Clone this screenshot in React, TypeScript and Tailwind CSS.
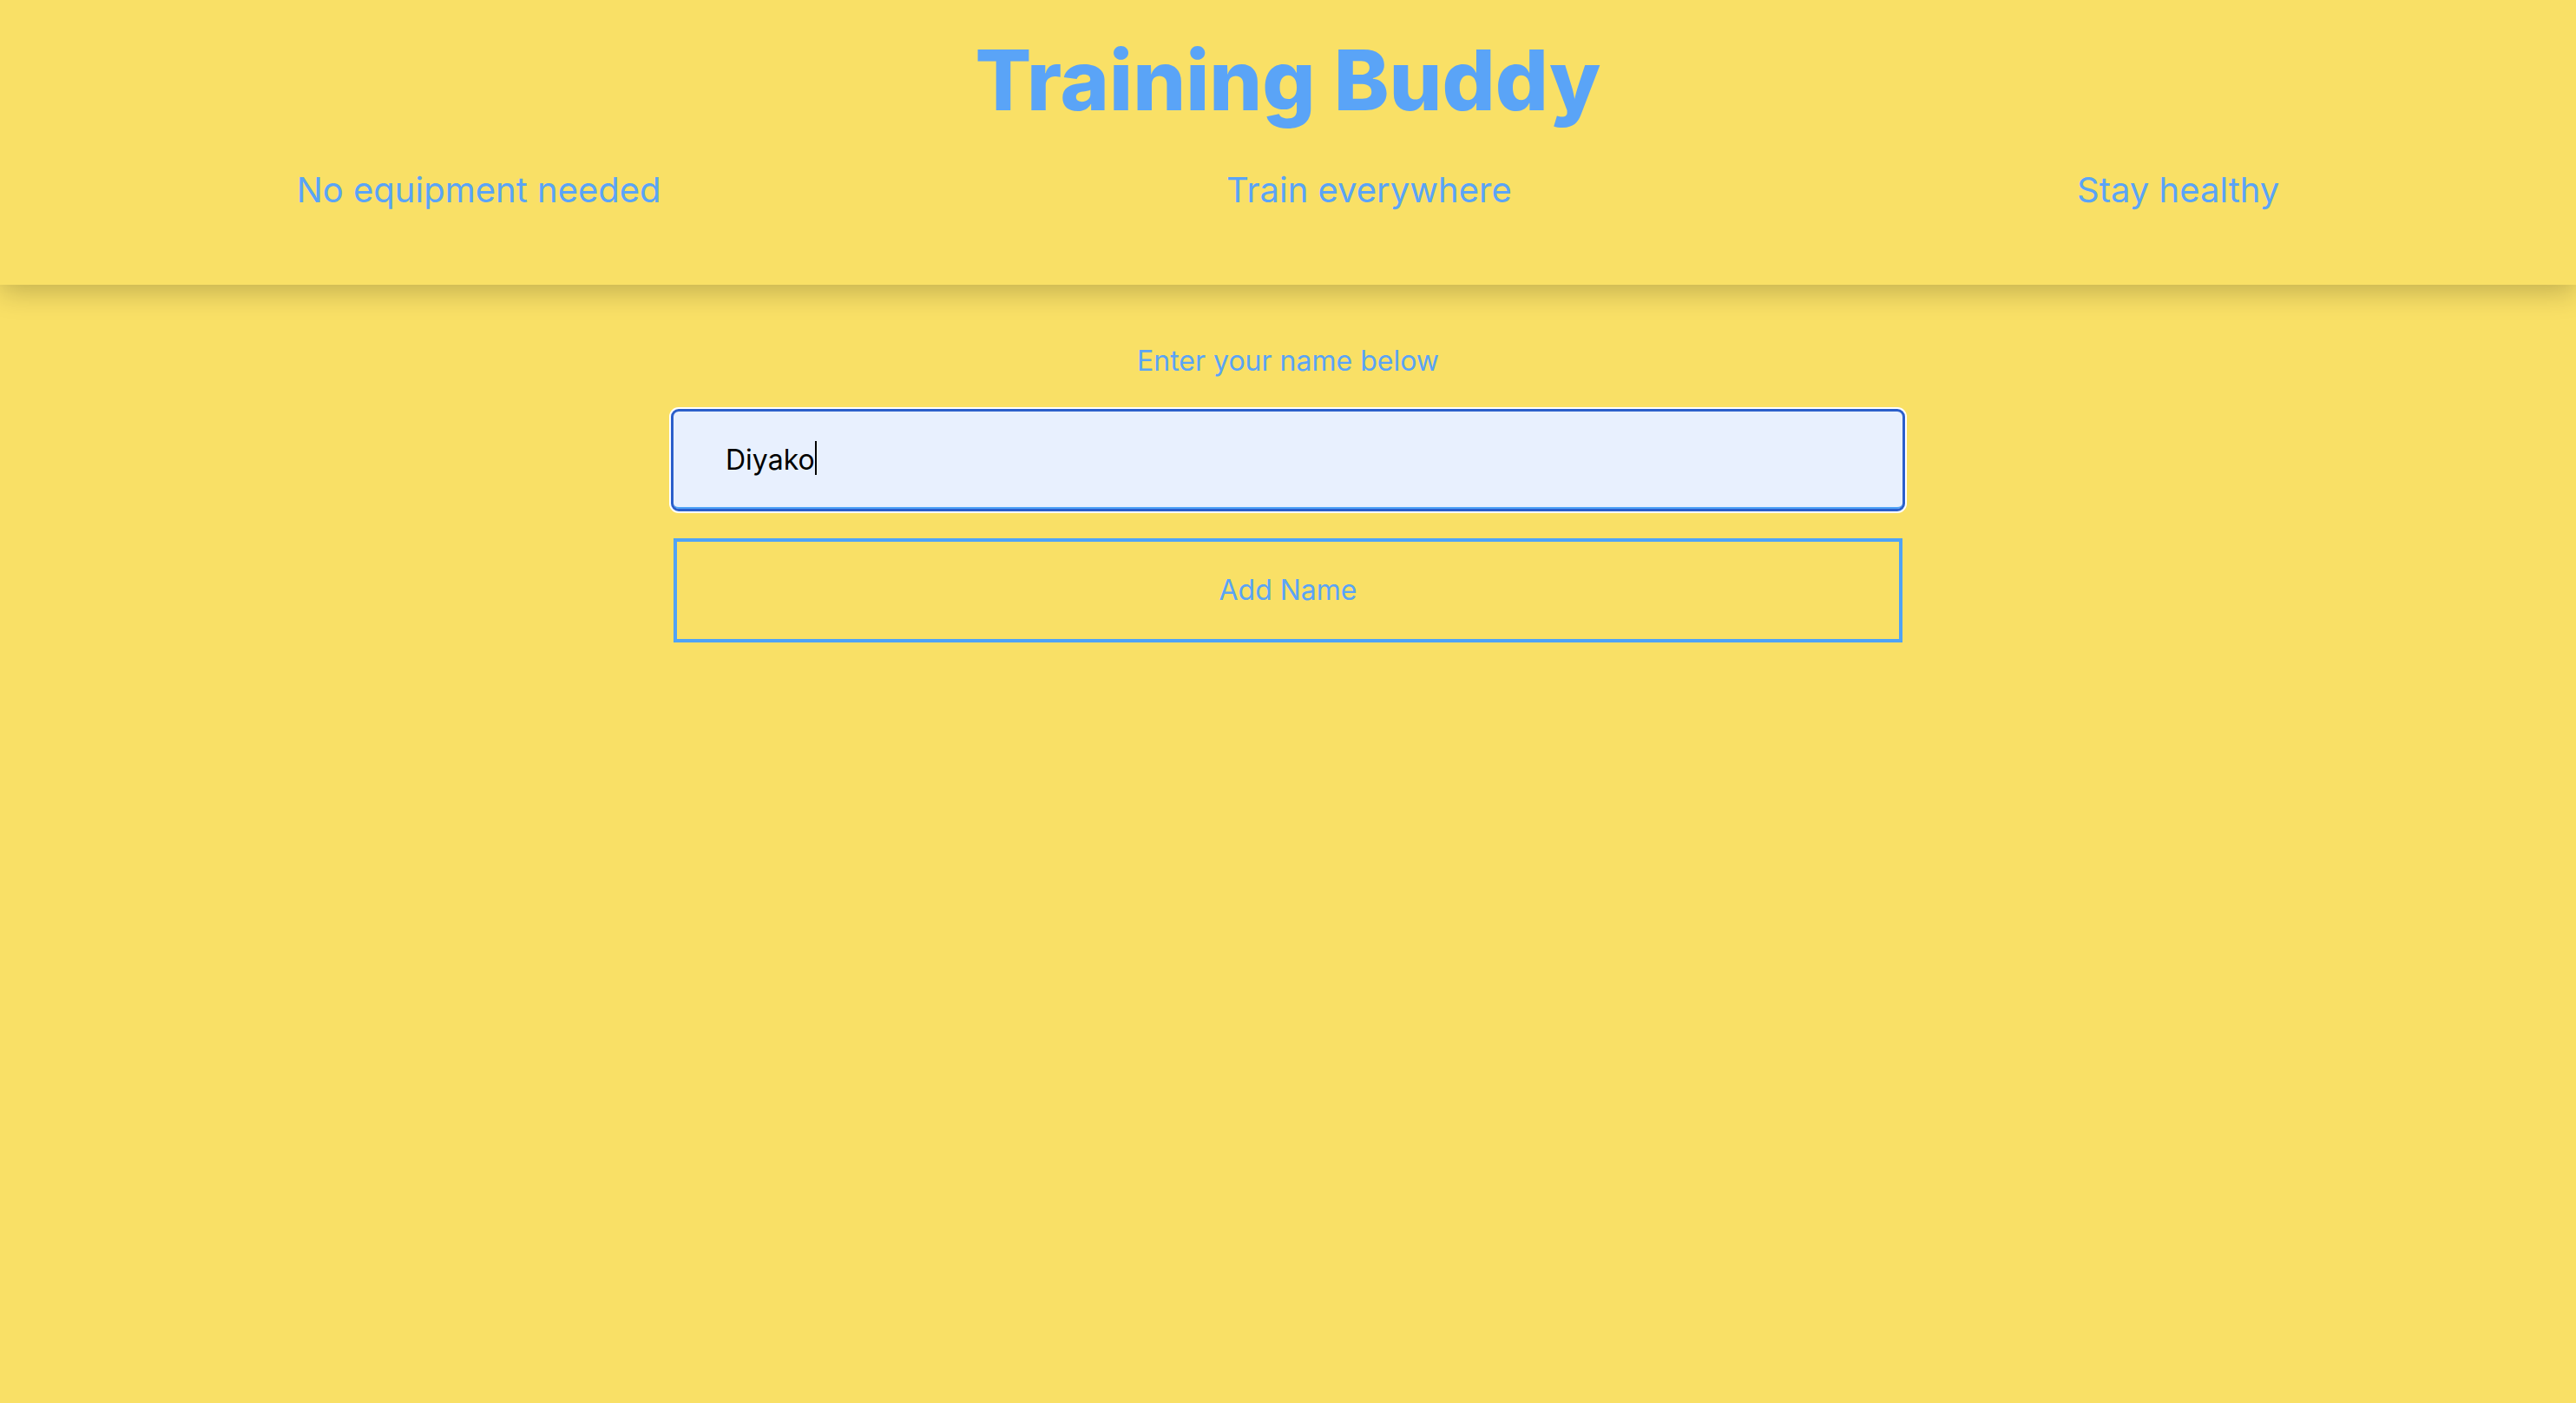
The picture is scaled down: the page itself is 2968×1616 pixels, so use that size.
export default function App() {
  const perks = ["No equipment needed", "Train everywhere", "Stay healthy"];

  return (
    <div className="min-h-screen bg-[#f9e066] font-[Inter,sans-serif] text-[#5aa4f7]">
      <header className="relative z-10 bg-[#f9e066] pt-[44px] pb-[85px] shadow-[0_8px_30px_rgba(0,0,0,0.22)]">
        <h1 className="text-center text-[96px] leading-none font-extrabold">Training Buddy</h1>
        <div className="mt-[55px] flex justify-around px-4">
          {perks.map((p) => (
            <p key={p} className="text-[40px] leading-[48px]">
              {p}
            </p>
          ))}
        </div>
      </header>

      <main className="mx-auto flex w-[1416px] flex-col items-stretch pt-[68px]">
        <label htmlFor="name" className="text-center text-[32px] leading-[39px]">
          Enter your name below
        </label>
        <div className="relative mt-[39px]">
          <input
            id="name"
            defaultValue="Diyako"
            className="h-[112px] w-full rounded-md border-b-2 border-[#4fa3f7] bg-[#e8f0fe] pl-[60px] text-[32px] text-black outline-3 outline-[#2b5fcb] shadow-[0_0_0_5px_white]"
          />
          {/* fake caret, the field is shown as focused */}
          <span className="pointer-events-none absolute top-[34px] left-[163px] h-[39px] w-[2px] bg-black" />
        </div>
        <button className="mt-[34px] h-[120px] border-4 border-[#4fa3f7] text-[32px]">Add Name</button>
      </main>
    </div>
  );
}
